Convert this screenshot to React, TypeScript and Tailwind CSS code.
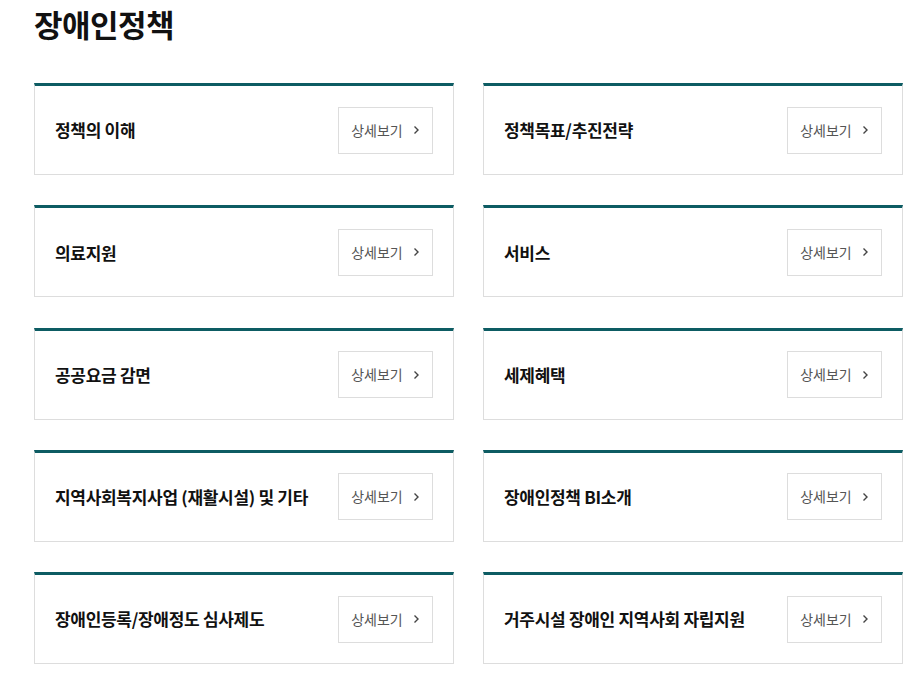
import React from "react";

const items: [string, string][] = [
  ["정책의 이해", "정책목표/추진전략"],
  ["의료지원", "서비스"],
  ["공공요금 감면", "세제혜택"],
  ["지역사회복지사업 (재활시설) 및 기타", "장애인정책 BI소개"],
  ["장애인등록/장애정도 심사제도", "거주시설 장애인 지역사회 자립지원"],
];

function Card({ title }: { title: string }) {
  return (
    <div className="flex h-[92px] items-center justify-between border border-[#dddddd] border-t-[3px] border-t-[#0d5c63] pl-[20px] pr-[20px] bg-white">
      <span className="text-[17px] font-bold text-[#111111] tracking-[-0.3px]">{title}</span>
      <button className="flex h-[47px] w-[95px] items-center justify-center gap-[10px] border border-[#dddddd] bg-white text-[14px] text-[#555555]">
        <span>상세보기</span>
        <svg width="7" height="10" viewBox="0 0 7 10" fill="none">
          <path d="M1.5 1.5L5 5L1.5 8.5" stroke="#444" strokeWidth="1.4" />
        </svg>
      </button>
    </div>
  );
}

export default function App() {
  return (
    <div
      className="w-[920px] h-[675px] bg-white overflow-hidden"
      style={{ fontFamily: '"Noto Sans CJK KR", "Noto Sans", sans-serif' }}
    >
      <h1 className="pl-[34px] pt-[2px] text-[31px] font-bold text-[#111111] leading-[44px] tracking-[-0.5px]">
        장애인정책
      </h1>
      <div className="mt-[37px] ml-[34px] w-[869px] grid grid-cols-2 gap-x-[29px] gap-y-[30.25px]">
        {items.map(([a, b]) => (
          <React.Fragment key={a}>
            <Card title={a} />
            <Card title={b} />
          </React.Fragment>
        ))}
      </div>
    </div>
  );
}
